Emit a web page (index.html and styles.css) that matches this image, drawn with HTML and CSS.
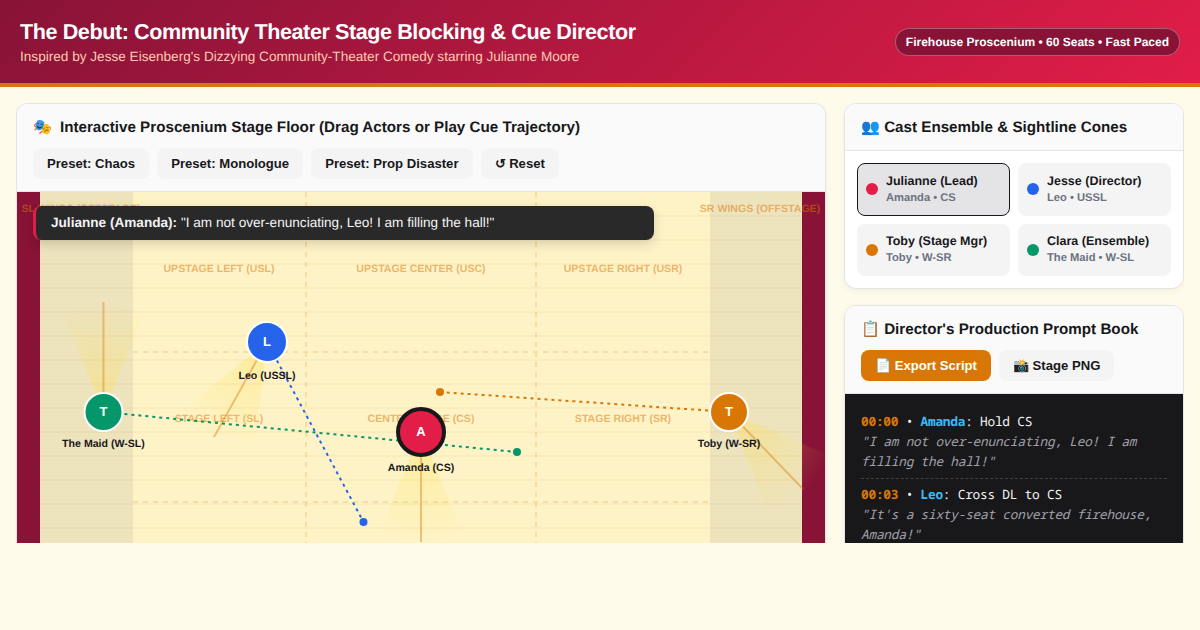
FILE: index.html
```html
<!DOCTYPE html>
<html lang="en">
<head>
    <meta charset="UTF-8">
    <title>The Debut: Stage Blocking & Cue Director</title>
    <link rel="stylesheet" href="styles.css">
</head>
<body>
    <header class="topbar">
        <div>
            <h1>The Debut: Community Theater Stage Blocking &amp; Cue Director</h1>
            <p class="subtitle">Inspired by Jesse Eisenberg's Dizzying Community-Theater Comedy starring Julianne Moore</p>
        </div>
        <div class="venue-pill">Firehouse Proscenium • 60 Seats • Fast Paced</div>
    </header>

    <main class="workspace">
        <section class="card">
            <div class="card-head">
                <h2><span class="head-icon">🎭</span>Interactive Proscenium Stage Floor (Drag Actors or Play Cue Trajectory)</h2>
                <div class="btn-row">
                    <button class="btn">Preset: Chaos</button>
                    <button class="btn">Preset: Monologue</button>
                    <button class="btn">Preset: Prop Disaster</button>
                    <button class="btn">↺ Reset</button>
                </div>
            </div>
            <div class="stage">
                <svg class="stage-svg" width="808" height="352" viewBox="0 0 808 352">
                    <defs>
                        <radialGradient id="coneFade" gradientUnits="userSpaceOnUse" cx="0" cy="0" r="110">
                            <stop offset="0" stop-color="#fde047" stop-opacity="0.38"/>
                            <stop offset="1" stop-color="#fde047" stop-opacity="0"/>
                        </radialGradient>
                        <path id="cone" d="M0 0 L101.6 -42.1 A110 110 0 0 1 101.6 42.1 Z" fill="url(#coneFade)"/>
                    </defs>

                    <rect class="curtain" x="0" y="0" width="808" height="352"/>
                    <rect class="floor" x="23" y="0" width="762" height="352"/>
                    <rect class="wing" x="23" y="0" width="93" height="352"/>
                    <rect class="wing" x="693" y="0" width="92" height="352"/>

                    <g class="grid-lines">
                        <path d="M23 24H785M23 48H785M23 72H785M23 96H785M23 120H785M23 144H785M23 168H785M23 192H785M23 216H785M23 240H785M23 264H785M23 288H785M23 312H785M23 336H785"/>
                    </g>
                    <g class="zone-lines">
                        <path d="M289 0V352M519 0V352M116 160H693M116 310H693"/>
                    </g>

                    <g class="zone-labels">
                        <text x="64" y="20">SL WINGS (OFFSTAGE)</text>
                        <text x="743" y="20">SR WINGS (OFFSTAGE)</text>
                        <text x="202" y="80">UPSTAGE LEFT (USL)</text>
                        <text x="404" y="80">UPSTAGE CENTER (USC)</text>
                        <text x="606" y="80">UPSTAGE RIGHT (USR)</text>
                        <text x="202" y="230">STAGE LEFT (SL)</text>
                        <text x="404" y="230">CENTER STAGE (CS)</text>
                        <text x="606" y="230">STAGE RIGHT (SR)</text>
                    </g>

                    <!-- sightline cones -->
                    <use href="#cone" transform="translate(250 150) rotate(119)"/>
                    <use href="#cone" transform="translate(86.5 220) rotate(-90)"/>
                    <use href="#cone" transform="translate(712 220) rotate(46)"/>
                    <use href="#cone" transform="translate(404 240) rotate(90)"/>
                    <g class="sightlines">
                        <line x1="250" y1="150" x2="197" y2="245"/>
                        <line x1="86.5" y1="220" x2="86.5" y2="110"/>
                        <line x1="712" y1="220" x2="786" y2="297"/>
                        <line x1="404" y1="240" x2="404" y2="350"/>
                    </g>

                    <!-- cue trajectories -->
                    <g class="trajectory traj-blue">
                        <line x1="250" y1="150" x2="346.5" y2="330"/>
                        <circle cx="346.5" cy="330" r="4"/>
                    </g>
                    <g class="trajectory traj-green">
                        <line x1="86.5" y1="220" x2="500" y2="260"/>
                        <circle cx="500" cy="260" r="4"/>
                    </g>
                    <g class="trajectory traj-orange">
                        <line x1="712" y1="220" x2="423" y2="200"/>
                        <circle cx="423" cy="200" r="4"/>
                    </g>

                    <!-- actors -->
                    <g class="actor">
                        <circle class="actor-blue" cx="250" cy="150" r="20"/>
                        <text class="actor-initial" x="250" y="154">L</text>
                        <text class="actor-label" x="250" y="187">Leo (USSL)</text>
                    </g>
                    <g class="actor">
                        <circle class="actor-green" cx="86.5" cy="220" r="19"/>
                        <text class="actor-initial" x="86.5" y="224">T</text>
                        <text class="actor-label" x="86.5" y="255">The Maid (W-SL)</text>
                    </g>
                    <g class="actor">
                        <circle class="actor-orange" cx="712" cy="220" r="19"/>
                        <text class="actor-initial" x="712" y="224">T</text>
                        <text class="actor-label" x="712" y="255">Toby (W-SR)</text>
                    </g>
                    <g class="actor">
                        <circle class="actor-red" cx="404" cy="240" r="23"/>
                        <text class="actor-initial" x="404" y="244">A</text>
                        <text class="actor-label" x="404" y="279">Amanda (CS)</text>
                    </g>
                </svg>
                <div class="line-bubble"><strong>Julianne (Amanda):</strong> "I am not over-enunciating, Leo! I am filling the hall!"</div>
            </div>
        </section>

        <aside class="side">
            <section class="card">
                <div class="card-head card-head-line">
                    <h2>👥 Cast Ensemble &amp; Sightline Cones</h2>
                </div>
                <div class="cast-grid">
                    <div class="cast-item active">
                        <span class="dot dot-red"></span>
                        <div><div class="cast-name">Julianne (Lead)</div><div class="cast-role">Amanda • CS</div></div>
                    </div>
                    <div class="cast-item">
                        <span class="dot dot-blue"></span>
                        <div><div class="cast-name">Jesse (Director)</div><div class="cast-role">Leo • USSL</div></div>
                    </div>
                    <div class="cast-item">
                        <span class="dot dot-orange"></span>
                        <div><div class="cast-name">Toby (Stage Mgr)</div><div class="cast-role">Toby • W-SR</div></div>
                    </div>
                    <div class="cast-item">
                        <span class="dot dot-green"></span>
                        <div><div class="cast-name">Clara (Ensemble)</div><div class="cast-role">The Maid • W-SL</div></div>
                    </div>
                </div>
            </section>

            <section class="card card-grow">
                <div class="card-head">
                    <h2>📋 Director's Production Prompt Book</h2>
                    <div class="btn-row">
                        <button class="btn btn-primary">📄 Export Script</button>
                        <button class="btn">📸 Stage PNG</button>
                    </div>
                </div>
                <div class="script-log">
                    <div class="cue">
                        <div><span class="cue-time">00:00</span> • <span class="cue-name">Amanda</span>: Hold CS</div>
                        <div class="cue-line">"I am not over-enunciating, Leo! I am filling the hall!"</div>
                    </div>
                    <div class="cue">
                        <div><span class="cue-time">00:03</span> • <span class="cue-name">Leo</span>: Cross DL to CS</div>
                        <div class="cue-line">"It's a sixty-seat converted firehouse, Amanda!"</div>
                    </div>
                </div>
            </section>
        </aside>
    </main>
</body>
</html>
```

FILE: styles.css
```css
* {
    box-sizing: border-box;
}
html, body {
    height: 100%;
}
body {
    margin: 0;
    background-color: #fffbeb;
    color: #18181b;
    font-family: "Liberation Sans", Arial, sans-serif;
    text-rendering: geometricPrecision;
    overflow: hidden;
}
.topbar {
    height: 87px;
    display: flex;
    align-items: center;
    justify-content: space-between;
    padding: 0 20px;
    background: linear-gradient(135deg, #881337, #e11d48);
    border-bottom: 4px solid #d97706;
    color: white;
}
.topbar h1 {
    margin: 0;
    font-size: 21.6px;
    line-height: 28px;
    letter-spacing: -0.02em;
}
.subtitle {
    margin: 2px 0 0;
    font-size: 13.6px;
    line-height: 18px;
    color: #fdcbb0;
}
.venue-pill {
    padding: 6px 10px;
    border: 1px solid rgba(255,255,255,0.3);
    border-radius: 20px;
    background-color: #881337;
    font-size: 12px;
    line-height: 14px;
    font-weight: bold;
}
.workspace {
    height: 440px;
    margin: 16px 16px 0;
    display: grid;
    grid-template-columns: 810px 340px;
    column-gap: 18px;
    overflow: hidden;
}
.side {
    display: flex;
    flex-direction: column;
    gap: 16px;
    min-height: 0;
}
.card {
    border: 1px solid #e4e4e7;
    border-radius: 12px;
    background-color: white;
    box-shadow: 0 2px 6px rgba(0,0,0,0.05);
    overflow: hidden;
}
.workspace > .card {
    border-bottom: none;
    border-bottom-left-radius: 0;
    border-bottom-right-radius: 0;
}
.card-grow {
    flex: 1;
    min-height: 0;
    margin-bottom: -200px;
}
.card-head {
    padding: 14px 16px 12px;
    background-color: #fafafa;
    border-bottom: 1px solid #e4e4e7;
}
.card-head h2 {
    margin: 0;
    font-size: 15.2px;
    line-height: 20px;
}
.head-icon {
    margin-right: 8px;
}
.btn-row {
    display: flex;
    gap: 8px;
    margin-top: 10px;
}
.btn {
    height: 31px;
    padding: 0 14px;
    border: none;
    border-radius: 8px;
    background-color: #f4f4f5;
    color: #18181b;
    font-family: inherit;
    font-size: 13.12px;
    font-weight: bold;
}
.btn-primary {
    background-color: #d97706;
    color: white;
}
.stage {
    position: relative;
    height: 352px;
}
.stage-svg {
    display: block;
}
.curtain {
    fill: #881337;
}
.floor {
    fill: #fef3c7;
}
.wing {
    fill: rgba(113,113,122,0.12);
}
.grid-lines path {
    fill: none;
    stroke: rgba(217,119,6,0.06);
    stroke-width: 2;
}
.zone-lines path {
    fill: none;
    stroke: rgba(217,119,6,0.18);
    stroke-width: 2;
    stroke-dasharray: 5 5;
}
.zone-labels text {
    fill: rgba(217,119,6,0.5);
    font-size: 10.6px;
    font-weight: bold;
    text-anchor: middle;
}
.sightlines line {
    stroke: rgba(217,119,6,0.42);
    stroke-width: 2;
}
.trajectory line {
    stroke-width: 2;
    stroke-dasharray: 3 4;
}
.traj-blue line { stroke: #2563eb; }
.traj-blue circle { fill: #2563eb; }
.traj-green line { stroke: #059669; }
.traj-green circle { fill: #059669; }
.traj-orange line { stroke: #d97706; }
.traj-orange circle { fill: #d97706; }
.actor circle {
    stroke: white;
    stroke-width: 2;
}
.actor-blue { fill: #2563eb; }
.actor-green { fill: #059669; }
.actor-orange { fill: #d97706; }
.actor .actor-red {
    fill: #e11d48;
    stroke: #18181b;
    stroke-width: 4;
}
.actor-initial {
    fill: white;
    font-size: 13px;
    font-weight: bold;
    text-anchor: middle;
}
.actor-label {
    fill: #18181b;
    font-size: 10.6px;
    font-weight: bold;
    text-anchor: middle;
}
.line-bubble {
    position: absolute;
    top: 14px;
    left: 16px;
    width: 621px;
    height: 34px;
    padding: 0 15px;
    border-left: 3px solid #e11d48;
    border-radius: 8px;
    background-color: #292929;
    box-shadow: 0 4px 12px rgba(0,0,0,0.15);
    color: #f4f4f5;
    font-size: 13.6px;
    line-height: 34px;
}
.card-head-line {
    padding-bottom: 12px;
}
.cast-grid {
    display: grid;
    grid-template-columns: 1fr 1fr;
    gap: 8px;
    padding: 12px;
}
.cast-item {
    display: flex;
    align-items: center;
    gap: 8px;
    padding: 8.5px 9px;
    border-radius: 8px;
    background-color: #f4f4f5;
}
.cast-item.active {
    padding: 7.5px 8px;
    border: 1px solid #18181b;
    background-color: #e4e4e7;
}
.dot {
    width: 12px;
    height: 12px;
    border-radius: 50%;
    flex-shrink: 0;
}
.dot-red { background-color: #e11d48; }
.dot-blue { background-color: #2563eb; }
.dot-orange { background-color: #d97706; }
.dot-green { background-color: #059669; }
.cast-name {
    font-size: 12.5px;
    line-height: 18px;
    font-weight: bold;
}
.cast-role {
    font-size: 11.2px;
    line-height: 17.5px;
    font-weight: bold;
    color: #6b7280;
}
.script-log {
    padding: 17px 16px 16px;
    height: 300px;
    background-color: #18181b;
    color: #f4f4f5;
    font-family: "Noto Sans Mono", "DejaVu Sans Mono", monospace;
    font-size: 12.8px;
    line-height: 20px;
    letter-spacing: -0.24px;
}
.cue {
    padding-bottom: 7px;
    margin-bottom: 5px;
    border-bottom: 1px dashed #3f3f46;
}
.cue-time {
    color: #d97706;
    font-weight: bold;
}
.cue-name {
    color: #38bdf8;
    font-weight: bold;
}
.cue-line {
    color: #a1a1aa;
    font-style: italic;
}
```
